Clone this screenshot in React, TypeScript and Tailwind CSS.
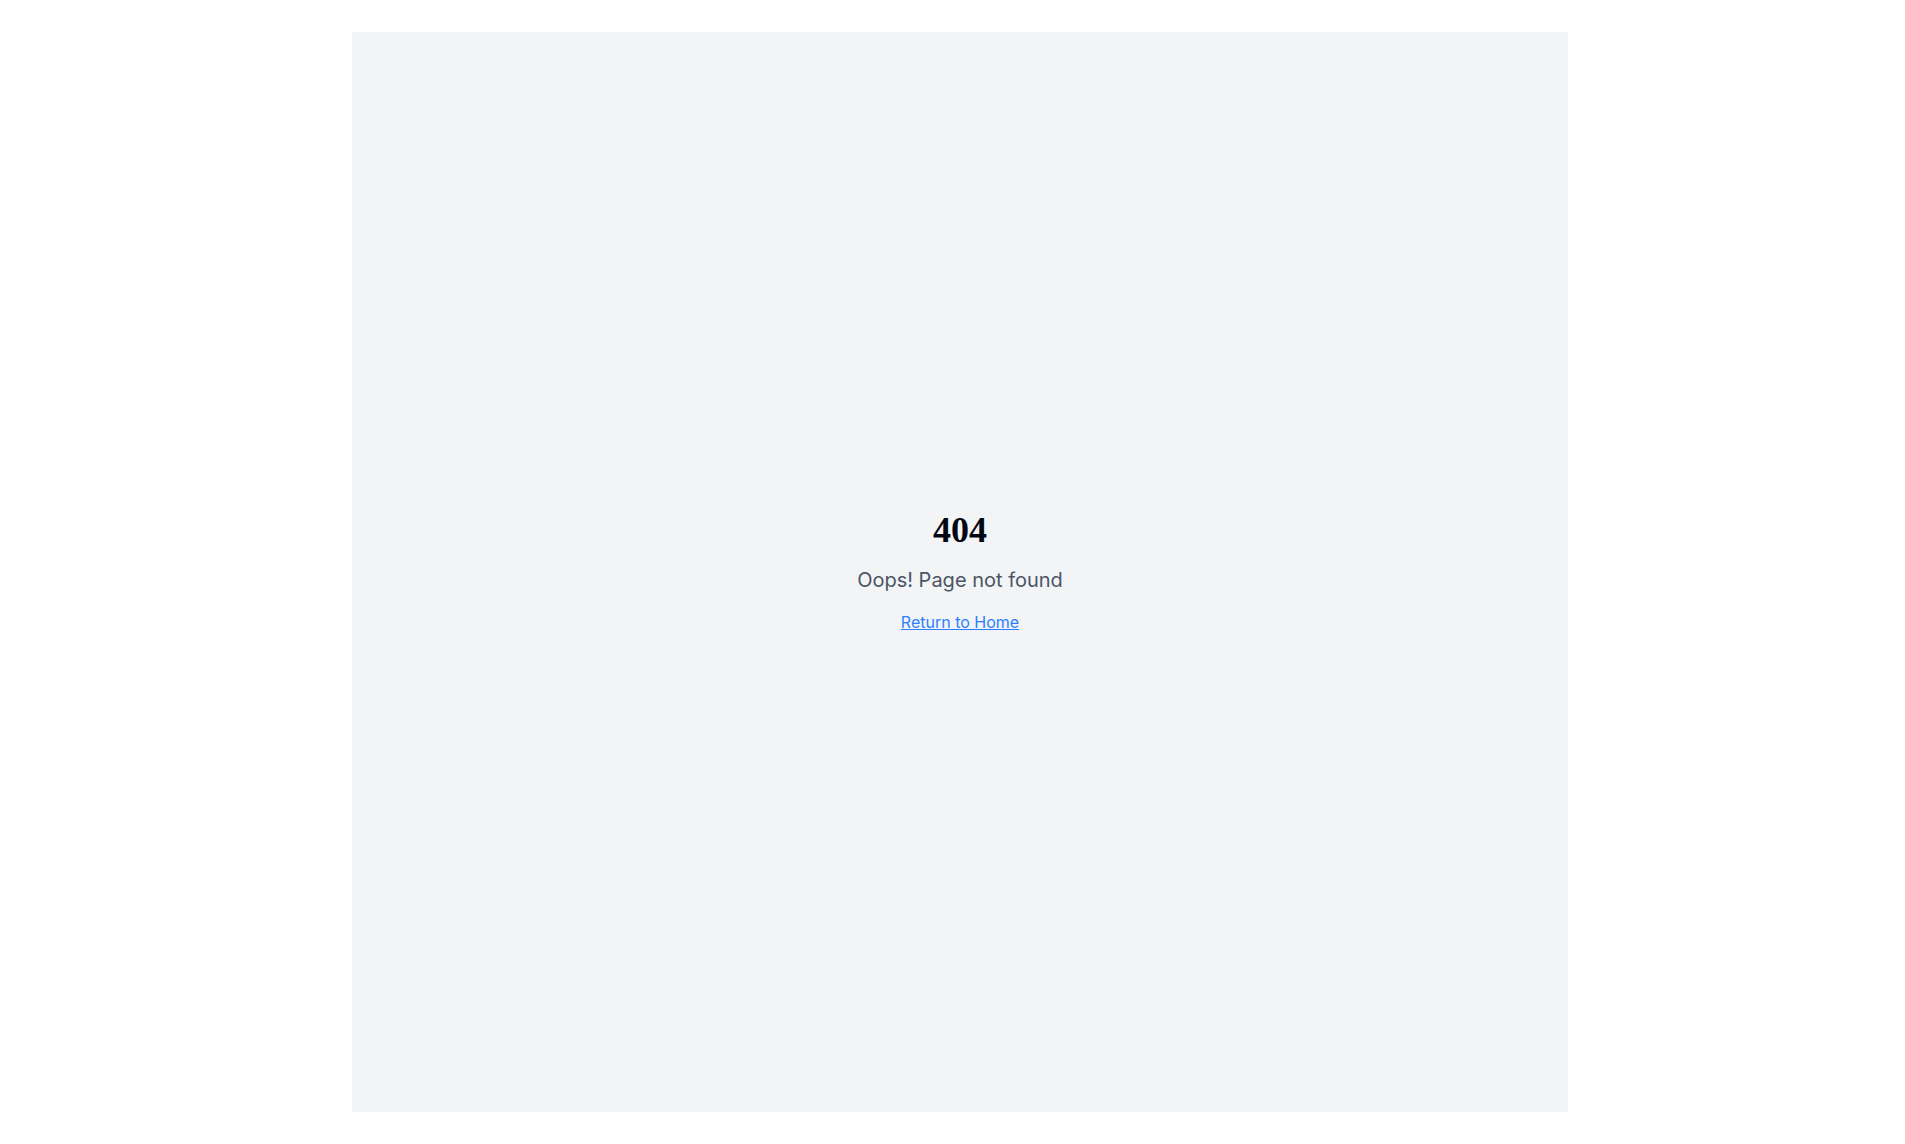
export default function App() {
  return (
    <div className="min-h-screen bg-white py-8" style={{ fontFamily: "Inter, 'Noto Sans', sans-serif" }}>
      <div className="ml-[352px] flex h-[1080px] w-[1216px] items-center justify-center bg-gray-100">
        <div className="text-center">
          <h1
            className="mb-4 text-4xl font-bold text-gray-950 oldstyle-nums"
            style={{ fontFamily: "'Liberation Serif', 'DejaVu Serif', serif" }}
          >
            404
          </h1>
          <p className="mb-4 text-xl text-gray-600">Oops! Page not found</p>
          <a href="/" className="text-blue-500 underline hover:text-blue-700">
            Return to Home
          </a>
        </div>
      </div>
    </div>
  );
}
